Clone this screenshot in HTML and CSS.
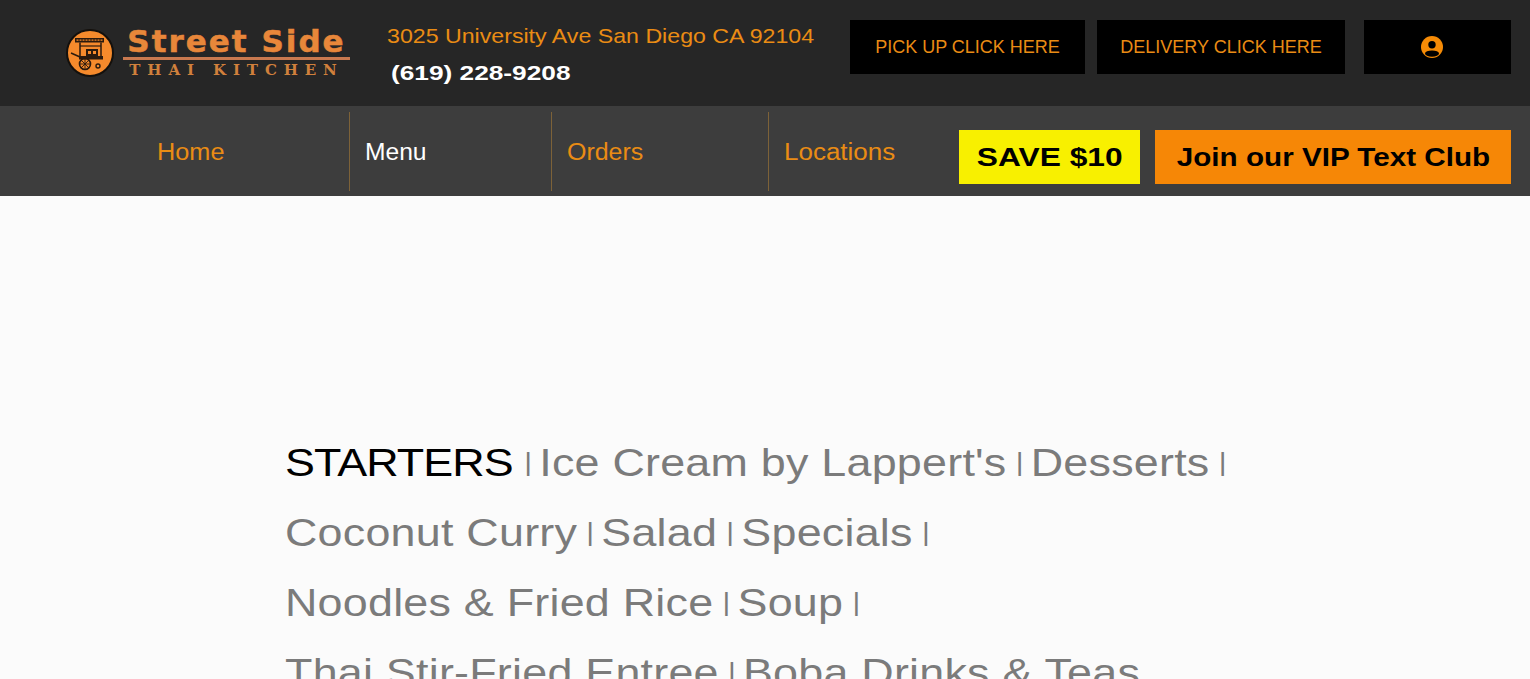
FILE: index.html
```html
<!DOCTYPE html>
<html lang="en">
<head>
  <meta charset="UTF-8">
  <title>Street Side Thai Kitchen</title>
  <link rel="stylesheet" href="styles.css">
</head>
<body>
  <header class="top-bar">
    <a class="logo" href="#">
      <svg class="logo-mark" viewBox="0 0 48 48" width="48" height="48">
        <circle cx="24" cy="24" r="23" fill="#f58a2c" stroke="#14100c" stroke-width="2"/>
        <rect x="9" y="9" width="29" height="4.5" fill="#2a1a0e"/>
        <path d="M10.5 11.2h26" stroke="#f58a2c" stroke-width="1.2" stroke-dasharray="2 1"/>
        <path d="M14 13.5v14M35 13.5v14" stroke="#2a1a0e" stroke-width="1.5"/>
        <path d="M14 17h21" stroke="#2a1a0e" stroke-width="1.2"/>
        <rect x="20" y="20" width="12" height="7" fill="#2a1a0e"/>
        <rect x="22" y="22" width="3" height="3" fill="#f58a2c"/>
        <rect x="27" y="22" width="3" height="3" fill="#f58a2c"/>
        <path d="M5 24l9 4" fill="none" stroke="#2a1a0e" stroke-width="1.6"/>
        <path d="M13 27h24v3.5H13z" fill="#2a1a0e"/>
        <circle cx="19" cy="35" r="5.5" fill="none" stroke="#2a1a0e" stroke-width="1.6"/>
        <path d="M19 29.5v11M13.5 35h11M15 31l8 8M23 31l-8 8" stroke="#2a1a0e" stroke-width="0.9"/>
        <circle cx="32" cy="37" r="2" fill="none" stroke="#2a1a0e" stroke-width="1.4"/>
      </svg>
      <div class="logo-words">
        <span class="logo-name">Street Side</span>
        <span class="logo-sub">THAI KITCHEN</span>
      </div>
    </a>
    <div class="contact">
      <p class="address">3025 University Ave San Diego CA 92104</p>
      <p class="phone">(619) 228-9208</p>
    </div>
    <div class="top-actions">
      <a class="top-button pickup" href="#">PICK UP CLICK HERE</a>
      <a class="top-button delivery" href="#">DELIVERY CLICK HERE</a>
      <a class="top-button account" href="#" aria-label="Account">
        <svg viewBox="0 0 22 22" width="22" height="22">
          <circle cx="11" cy="11" r="11" fill="#f68b06"/>
          <circle cx="11" cy="8.7" r="3.7" fill="#000"/>
          <ellipse cx="11" cy="17.6" rx="7" ry="3.2" fill="#000"/>
        </svg>
      </a>
    </div>
  </header>

  <nav class="main-nav">
    <ul class="nav-links">
      <li class="nav-home"><a href="#">Home</a></li>
      <li class="nav-menu"><a class="current" href="#">Menu</a></li>
      <li class="nav-orders"><a href="#">Orders</a></li>
      <li class="nav-locations"><a href="#">Locations</a></li>
    </ul>
    <div class="promos">
      <a class="promo save" href="#"><span>SAVE $10</span></a>
      <a class="promo vip" href="#"><span>Join our VIP Text Club</span></a>
    </div>
  </nav>

  <main class="menu-page">
    <div class="categories">
      <a class="cat active" href="#">STARTERS</a><span class="sep">|</span>
      <a class="cat" href="#">Ice Cream by Lappert's</a><span class="sep">|</span>
      <a class="cat" href="#">Desserts</a><span class="sep">|</span>
      <a class="cat" href="#">Coconut Curry</a><span class="sep">|</span>
      <a class="cat" href="#">Salad</a><span class="sep">|</span>
      <a class="cat" href="#">Specials</a><span class="sep">|</span>
      <a class="cat" href="#">Noodles &amp; Fried Rice</a><span class="sep">|</span>
      <a class="cat" href="#">Soup</a><span class="sep">|</span>
      <a class="cat" href="#">Thai Stir-Fried Entree</a><span class="sep">|</span>
      <a class="cat" href="#">Boba Drinks &amp; Teas</a>
    </div>
  </main>
</body>
</html>
```

FILE: styles.css
```css
html, body {
  margin: 0;
  padding: 0;
  height: 100%;
  overflow: hidden;
}
body {
  font-family: "Liberation Sans", Arial, sans-serif;
  background-color: #fbfbfb;
  color: #000000;
}
a {
  text-decoration: none;
  color: inherit;
}

/* top bar */
.top-bar {
  height: 106px;
  box-sizing: border-box;
  background-color: #262626;
  display: flex;
  align-items: flex-start;
  padding-left: 66px;
}
.logo {
  width: 284px;
  flex-shrink: 0;
  display: flex;
  align-items: flex-start;
}
.logo-mark {
  flex-shrink: 0;
  margin-top: 29px;
}
.logo-words {
  margin-left: 9px;
  margin-top: 25px;
  width: 227px;
  display: flex;
  flex-direction: column;
  align-items: center;
  color: #e8873a;
}
.logo-name {
  font-family: "DejaVu Sans", sans-serif;
  font-weight: bold;
  font-size: 31px;
  line-height: 32px;
  letter-spacing: 2px;
  -webkit-text-stroke: 0.5px #e8873a;
  white-space: nowrap;
  width: 100%;
  text-align: center;
  border-bottom: 3px solid #c9794f;
}
.logo-sub {
  font-family: "DejaVu Serif", serif;
  font-weight: bold;
  font-size: 15px;
  line-height: 18px;
  letter-spacing: 6.9px;
  padding-top: 1px;
  color: #d0803c;
  white-space: nowrap;
}
.contact {
  margin-left: 37px;
  width: 463px;
  flex-shrink: 0;
}
.contact p {
  margin: 0;
  white-space: nowrap;
}
.contact .address {
  padding-top: 23px;
  font-size: 21px;
  line-height: 26px;
  color: #ea8c14;
  transform: scaleX(1.103);
  transform-origin: left;
}
.contact .phone {
  padding-top: 11px;
  margin-left: 4px;
  font-size: 21px;
  line-height: 26px;
  font-weight: bold;
  color: #ffffff;
  transform: scaleX(1.25);
  transform-origin: left;
}
.top-actions {
  display: flex;
  margin-top: 20px;
}
.top-button {
  height: 54px;
  background-color: #000000;
  color: #ea8c14;
  font-size: 18px;
  display: flex;
  align-items: center;
  justify-content: center;
  white-space: nowrap;
}
.pickup {
  width: 235px;
  margin-right: 12px;
}
.delivery {
  width: 248px;
  margin-right: 19px;
}
.account {
  width: 147px;
  justify-content: flex-start;
  padding-left: 57px;
  box-sizing: border-box;
}

/* main nav */
.main-nav {
  height: 90px;
  box-sizing: border-box;
  background-color: #3d3d3d;
  display: flex;
  justify-content: space-between;
  padding: 6px 19px 5px 0;
}
.nav-links {
  list-style: none;
  margin: 0;
  padding: 0;
  display: flex;
}
.nav-links li {
  height: 79px;
  box-sizing: border-box;
  display: flex;
  align-items: center;
  font-size: 23px;
  color: #ea8c14;
  padding-top: 1px;
  border-right: 1px solid #7d6238;
}
.nav-links a {
  display: inline-block;
  transform: scaleX(1.1);
  transform-origin: left;
}
.nav-links .nav-home {
  width: 350px;
  padding-left: 157px;
}
.nav-links .nav-menu {
  width: 202px;
  padding-left: 15px;
}
.nav-links .nav-menu a {
  transform: scaleX(1.07);
}
.nav-links .nav-orders {
  width: 217px;
  padding-left: 15px;
}
.nav-links .nav-orders a {
  transform: scaleX(1.085);
}
.nav-links .nav-locations {
  padding-left: 15px;
  border-right: none;
}
.nav-links .nav-locations a {
  transform: scaleX(1.13);
}
.nav-links .current {
  color: #ffffff;
}
.promos {
  display: flex;
  margin-top: 18px;
}
.promo {
  height: 54px;
  display: flex;
  align-items: center;
  justify-content: center;
  font-size: 26px;
  font-weight: bold;
  color: #000000;
  white-space: nowrap;
}
.save {
  width: 181px;
  background-color: #f8f000;
  margin-right: 15px;
}
.save span {
  transform: scaleX(1.22);
}
.vip {
  width: 356px;
  background-color: #f68706;
}
.vip span {
  transform: scaleX(1.14);
}

/* menu categories */
.menu-page {
  padding: 232px 0 0 285px;
}
.categories {
  width: 835px;
  line-height: 70px;
  font-size: 39px;
  color: #7b7b7b;
  letter-spacing: 0.2px;
  transform: scaleX(1.15);
  transform-origin: left;
}
.cat {
  white-space: nowrap;
}
.cat.active {
  color: #000000;
  letter-spacing: -0.8px;
  margin-right: 2px;
}
.sep {
  font-size: 26px;
  line-height: 0;
  margin: 0 -5px 0 8px;
  vertical-align: 5px;
}
```
